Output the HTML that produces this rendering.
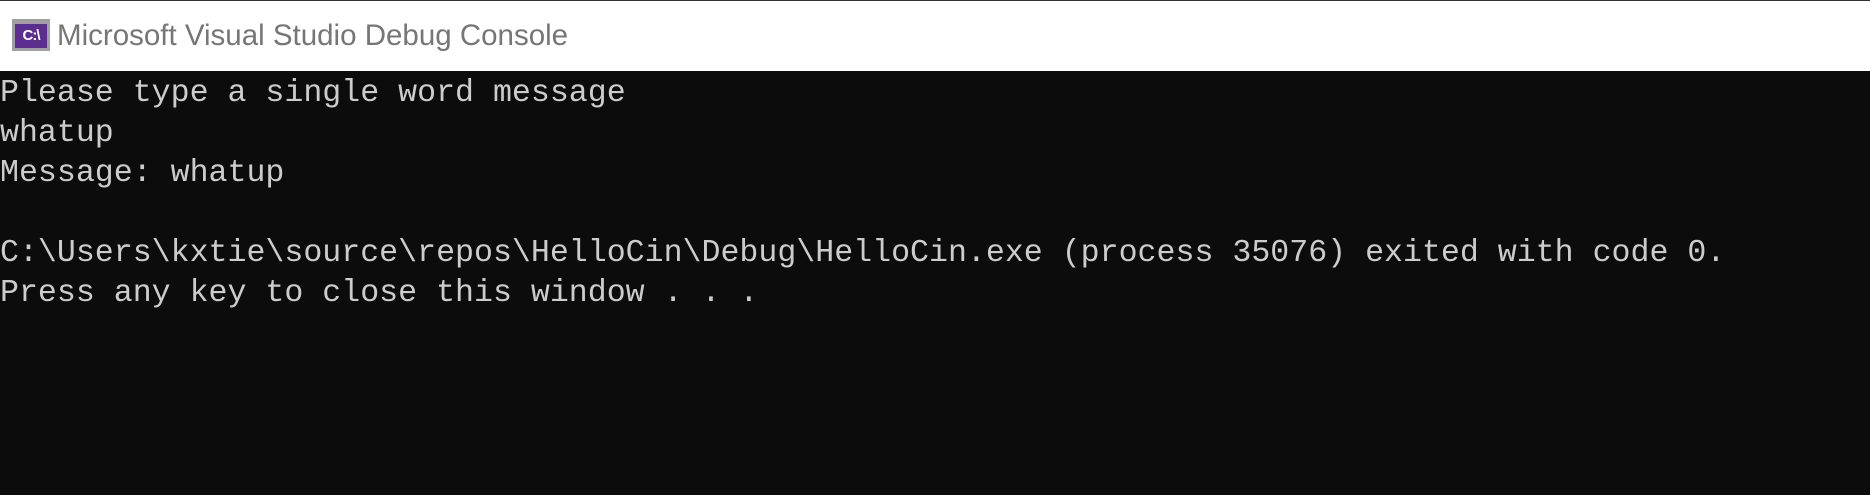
<!DOCTYPE html>
<html><head><meta charset="utf-8"><style>
html,body{margin:0;padding:0;width:1870px;height:495px;overflow:hidden;background:#0c0c0c}
.top{position:absolute;left:0;top:0;width:1870px;height:1px;background:#333}
.title{position:absolute;left:0;top:1px;width:1870px;height:70px;background:#fff}
.icon{position:absolute;left:12px;top:18px;width:38px;height:32px;background:#a0a0a0;}
.icon .in{position:absolute;left:3px;top:5px;width:32px;height:24px;background:#5c2d91;color:#fff;font:bold 15px "Liberation Sans",sans-serif;line-height:24px;text-align:center;letter-spacing:-1px}
.ttext{position:absolute;left:57px;top:20px;font-family:"Liberation Sans",sans-serif;font-size:29.5px;line-height:1;color:#767676;white-space:nowrap}
.con{position:absolute;left:0;top:74px;color:#cccccc;font-family:"Liberation Mono",monospace;font-size:31.6px;line-height:40px;white-space:pre}
</style></head><body>
<div class="top"></div>
<div class="title"><div class="icon"><div class="in">C:\</div></div><div class="ttext">Microsoft Visual Studio Debug Console</div></div>
<div class="con">Please type a single word message
whatup
Message: whatup

C:\Users\kxtie\source\repos\HelloCin\Debug\HelloCin.exe (process 35076) exited with code 0.
Press any key to close this window . . .</div>
</body></html>
